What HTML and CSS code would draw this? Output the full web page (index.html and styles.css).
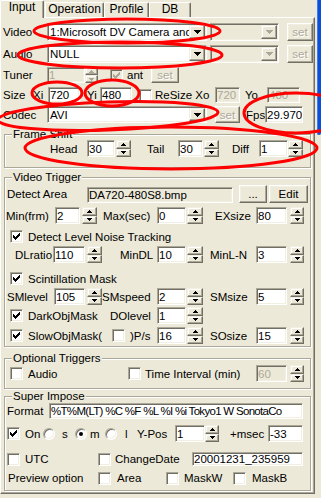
FILE: index.html
```html
<!DOCTYPE html>
<html>
<head>
<meta charset="utf-8">
<link rel="stylesheet" href="styles.css">
</head>
<body>
<div class="window">
  <div class="main">
    <div class="tabs">
      <div class="tab sel w44">Input</div>
      <div class="tab ml1 w59">Operation</div>
      <div class="tab w45">Profile</div>
      <div class="tab w42">DB</div>
    </div>
    <div class="panel">
      <div class="row h18 mt5">
        <span class="lbl ml2 w44">Video</span>
        <div class="combo w160"><span class="val">1:Microsoft DV Camera and VCR</span><i class="drop"></i></div>
        <div class="combo dis ml3 w69"><span class="val"></span><i class="drop"></i></div>
        <div class="btn dis ml8 w26">set</div>
      </div>
      <div class="row h18 mt4">
        <span class="lbl ml2 w44">Audio</span>
        <div class="combo w160"><span class="val">NULL</span><i class="drop"></i></div>
        <div class="combo dis ml3 w69"><span class="val"></span><i class="drop"></i></div>
        <div class="btn dis ml8 w26">set</div>
      </div>
      <div class="row h16 mt4">
        <span class="lbl ml2 w44">Tuner</span>
        <div class="edit dis w38">1</div>
        <div class="spin dis w13"><i class="up"></i><i class="dn"></i></div>
        <span class="chk on dis ml12"></span>
        <span class="lbl ml4 w24">ant</span>
        <div class="btn dis w28">set</div>
      </div>
      <div class="row h16 mt4">
        <span class="lbl ml2 w30">Size</span>
        <span class="lbl w15">Xi</span>
        <div class="edit w32">720</div>
        <span class="lbl ml7 w13">Yi</span>
        <div class="edit w32">480</div>
        <span class="chk ml7"></span>
        <span class="lbl ml3 w60">ReSize Xo</span>
        <div class="edit dis w25">720</div>
        <span class="lbl ml5 w22">Yo</span>
        <div class="edit dis w33">480</div>
      </div>
      <div class="row h17 mt3">
        <span class="lbl ml2 w44">Codec</span>
        <div class="combo w160"><span class="val">AVI</span><i class="drop"></i></div>
        <div class="btn dis ml8 w25">set</div>
        <span class="lbl ml6 w19">Fps</span>
        <div class="edit w38">29.970</div>
      </div>

      <div class="group fs">
        <div class="legend">Frame Shift</div>
        <div class="row h17">
          <span class="lbl ml45 w37">Head</span>
          <div class="edit w28">30</div>
          <div class="spin ml1"><i class="up"></i><i class="dn"></i></div>
          <span class="lbl ml16 w31">Tail</span>
          <div class="edit w25">30</div>
          <div class="spin ml1"><i class="up"></i><i class="dn"></i></div>
          <span class="lbl ml13 w27">Diff</span>
          <div class="edit w29">1</div>
          <div class="spin"><i class="up"></i><i class="dn"></i></div>
        </div>
      </div>

      <div class="group vt">
        <div class="legend">Video Trigger</div>
        <div class="row h18 mt2">
          <span class="lbl ml2 w80">Detect Area</span>
          <div class="edit ro w146">DA720-480S8.bmp</div>
          <div class="btn ml6 w28">...</div>
          <div class="btn ml2 w39">Edit</div>
        </div>
        <div class="row h17 mt4">
          <span class="lbl ml1 w49">Min(frm)</span>
          <div class="edit w25">2</div>
          <div class="spin ml2"><i class="up"></i><i class="dn"></i></div>
          <span class="lbl ml6 w54">Max(sec)</span>
          <div class="edit w29">0</div>
          <div class="spin ml1 w16"><i class="up"></i><i class="dn"></i></div>
          <span class="lbl ml12 w41">EXsize</span>
          <div class="edit w31">80</div>
          <div class="spin ml3 w14"><i class="up"></i><i class="dn"></i></div>
        </div>
        <div class="row h13 mt6">
          <span class="chk on ml5"></span>
          <span class="lbl ml5">Detect Level Noise Tracking</span>
        </div>
        <div class="row h17 mt3">
          <span class="lbl ml10 w38">DLratio</span>
          <div class="edit w32">110</div>
          <div class="spin ml2"><i class="up"></i><i class="dn"></i></div>
          <span class="lbl ml18 w37">MinDL</span>
          <div class="edit w29">10</div>
          <div class="spin ml1 w16"><i class="up"></i><i class="dn"></i></div>
          <span class="lbl ml7 w46">MinL-N</span>
          <div class="edit w31">3</div>
          <div class="spin ml3 w14"><i class="up"></i><i class="dn"></i></div>
        </div>
        <div class="row h13 mt9">
          <span class="chk on ml5"></span>
          <span class="lbl ml5">Scintillation Mask</span>
        </div>
        <div class="row h17 mt3">
          <span class="lbl ml2 w47">SMlevel</span>
          <div class="edit w31">105</div>
          <div class="spin ml2"><i class="up"></i><i class="dn"></i></div>
          <span class="lbl w55">SMspeed</span>
          <div class="edit w29">2</div>
          <div class="spin ml1 w16"><i class="up"></i><i class="dn"></i></div>
          <span class="lbl ml7 w46">SMsize</span>
          <div class="edit w31">5</div>
          <div class="spin ml3 w14"><i class="up"></i><i class="dn"></i></div>
        </div>
        <div class="row h17 mt2">
          <span class="chk on ml5"></span>
          <span class="lbl ml5 w82">DarkObjMask</span>
          <span class="lbl w47">DOlevel</span>
          <div class="edit w29">1</div>
          <div class="spin ml1 w16"><i class="up"></i><i class="dn"></i></div>
        </div>
        <div class="row h17 mt3">
          <span class="chk on ml5"></span>
          <span class="lbl ml5 w84">SlowObjMask(</span>
          <span class="chk"></span>
          <span class="lbl ml5 w27">)P/s</span>
          <div class="edit w29">16</div>
          <div class="spin ml1 w16"><i class="up"></i><i class="dn"></i></div>
          <span class="lbl ml7 w46">SOsize</span>
          <div class="edit w31">15</div>
          <div class="spin ml3 w14"><i class="up"></i><i class="dn"></i></div>
        </div>
      </div>

      <div class="group ot">
        <div class="legend">Optional Triggers</div>
        <div class="row h17 mt1">
          <span class="chk ml5"></span>
          <span class="lbl ml5 w100">Audio</span>
          <span class="chk"></span>
          <span class="lbl ml4 w111">Time Interval (min)</span>
          <div class="edit dis w31">60</div>
          <div class="spin ml3 w14"><i class="up"></i><i class="dn"></i></div>
        </div>
      </div>

      <div class="group si">
        <div class="legend">Super Impose</div>
        <div class="row h16 mt1">
          <span class="lbl ml2 w42">Format</span>
          <div class="edit fmt w254">%T%M(LT) %C %F %L %I %i Tokyo1 W SonotaCo</div>
        </div>
        <div class="row h17 mt6">
          <span class="chk on ml2"></span>
          <span class="lbl ml5 w18">On</span>
          <span class="radio"></span>
          <span class="lbl ml7 w13">s</span>
          <span class="radio on"></span>
          <span class="lbl ml3 w15">m</span>
          <span class="radio"></span>
          <span class="lbl ml8 w12">l</span>
          <span class="lbl w38">Y-Pos</span>
          <div class="edit w30">1</div>
          <div class="spin w14"><i class="up"></i><i class="dn"></i></div>
          <span class="lbl ml11 w38">+msec</span>
          <div class="edit w35">-33</div>
        </div>
        <div class="row h14 mt10">
          <span class="chk ml2"></span>
          <span class="lbl ml5 w73">UTC</span>
          <span class="chk"></span>
          <span class="lbl ml4 w77">ChangeDate</span>
          <div class="edit w111">20001231_235959</div>
        </div>
        <div class="row h14 mt5">
          <span class="lbl ml3 w90">Preview option</span>
          <span class="chk"></span>
          <span class="lbl ml6 w49">Area</span>
          <span class="chk"></span>
          <span class="lbl ml5 w49">MaskW</span>
          <span class="chk"></span>
          <span class="lbl ml6">MaskB</span>
        </div>
      </div>
    </div>
  </div>
  <div class="edge"></div>
</div>
<svg class="marks" width="321" height="498" viewBox="0 0 321 498">
  <g fill="none" stroke="#ff0000" stroke-width="3">
    <ellipse cx="127" cy="31" rx="93" ry="12"/>
    <ellipse cx="120" cy="55" rx="102" ry="13"/>
    <ellipse cx="57" cy="93" rx="25" ry="11"/>
    <ellipse cx="112" cy="93" rx="27" ry="13"/>
    <ellipse cx="108" cy="116" rx="110" ry="14" transform="rotate(-2 108 116)"/>
    <ellipse cx="296" cy="113" rx="52" ry="20"/>
    <ellipse cx="171" cy="148" rx="146" ry="21"/>
  </g>
</svg>
</body>
</html>
```

FILE: styles.css
```css
* { box-sizing: border-box; }
html, body { margin: 0; padding: 0; }
body {
  width: 321px;
  height: 498px;
  overflow: hidden;
  position: relative;
  background: #ECE9D8;
  color: #000;
  font-family: "Liberation Sans", Arial, sans-serif;
  font-size: 11.5px;
}
.window { display: flex; align-items: flex-start; }
.main { width: 317px; flex: none; }
.edge {
  width: 4px;
  height: 135px;
  flex: none;
  background: #0A4FDC;
  box-shadow: inset 1px 0 #3D7BF0;
  border-radius: 0 0 2px 2px;
}

/* tabs */
.tabs { display: flex; align-items: flex-end; height: 17px; }
.tab {
  flex: none;
  height: 15px;
  border: 1px solid #fff;
  border-bottom: none;
  border-right-color: #716F64;
  box-shadow: inset -1px 0 #ACA899;
  border-radius: 2px 2px 0 0;
  text-align: center;
  line-height: 13px;
  font-size: 12px;
  white-space: nowrap;
}
.tab.sel {
  height: 18px;
  margin-bottom: -1px;
  position: relative;
  z-index: 1;
  background: #ECE9D8;
}

/* panel */
.panel {
  width: 315px;
  height: 477px;
  border: 1px solid;
  border-color: #fff #716F64 #716F64 #fff;
  box-shadow: inset -1px -1px #ACA899;
}

.row { display: flex; align-items: center; }
.lbl { flex: none; white-space: nowrap; line-height: 14px; }

/* group boxes */
.group {
  margin-left: 3px;
  width: 307px;
  border: 1px solid #ACA899;
  box-shadow: inset 1px 1px #fff, 1px 1px #fff;
}
.legend {
  margin: -7px 0 0 7px;
  padding: 0 1px;
  width: max-content;
  background: #ECE9D8;
  line-height: 12px;
}
.fs { margin-top: 11px; height: 34px; }
.vt { margin-top: 9px; height: 170px; }
.ot { margin-top: 11px; height: 31px; }
.si { margin-top: 7px; height: 95px; }

/* edit box */
.edit {
  flex: none;
  align-self: stretch;
  background: #fff;
  border: 1px solid;
  border-color: #ACA899 #fff #fff #ACA899;
  box-shadow: inset 1px 1px #716F64, inset -1px -1px #F1EFE2;
  padding: 0 1px 0 1px;
  display: flex;
  align-items: center;
  white-space: nowrap;
  overflow: hidden;
}
.edit.dis { background: #ECE9D8; color: #ACA899; }
.edit.ro { background: #ECE9D8; align-self: flex-end; height: 16px; }
.edit.fmt { letter-spacing: -0.7px; }

/* combo */
.combo {
  flex: none;
  align-self: stretch;
  display: flex;
  padding: 1px;
  background: #fff;
  border: 1px solid;
  border-color: #ACA899 #fff #fff #ACA899;
  box-shadow: inset 1px 1px #716F64, inset -1px -1px #F1EFE2;
}
.combo.dis { background: #ECE9D8; }
.combo .val {
  flex: 1;
  min-width: 0;
  padding-left: 1px;
  overflow: hidden;
  white-space: nowrap;
  display: flex;
  align-items: center;
}
.combo .drop {
  width: 16px;
  flex: none;
  background: #ECE9D8;
  border: 1px solid;
  border-color: #F1EFE2 #716F64 #716F64 #F1EFE2;
  box-shadow: inset -1px -1px #ACA899, inset 1px 1px #fff;
  display: flex;
  align-items: center;
  justify-content: center;
}
.combo .drop::after {
  content: "";
  width: 7px;
  height: 4px;
  background:
    linear-gradient(#000, #000) 0 0 / 7px 1px no-repeat,
    linear-gradient(#000, #000) 1px 1px / 5px 1px no-repeat,
    linear-gradient(#000, #000) 2px 2px / 3px 1px no-repeat,
    linear-gradient(#000, #000) 3px 3px / 1px 1px no-repeat;
}
.combo.dis .drop::after {
  background:
    linear-gradient(#ACA899, #ACA899) 0 0 / 7px 1px no-repeat,
    linear-gradient(#ACA899, #ACA899) 1px 1px / 5px 1px no-repeat,
    linear-gradient(#ACA899, #ACA899) 2px 2px / 3px 1px no-repeat,
    linear-gradient(#ACA899, #ACA899) 3px 3px / 1px 1px no-repeat;
}

/* buttons */
.btn {
  flex: none;
  align-self: stretch;
  border: 1px solid;
  border-color: #fff #716F64 #716F64 #fff;
  box-shadow: inset -1px -1px #ACA899, inset 1px 1px #F1EFE2;
  display: flex;
  align-items: center;
  justify-content: center;
  white-space: nowrap;
}
.dis { color: #ACA899; }
.btn.dis { text-shadow: 1px 1px #fff; }

/* spinner */
.spin {
  flex: none;
  align-self: stretch;
  width: 15px;
  display: flex;
  flex-direction: column;
}
.spin i {
  flex: 1;
  border: 1px solid;
  border-color: #F1EFE2 #716F64 #716F64 #F1EFE2;
  box-shadow: inset -1px -1px #ACA899, inset 1px 1px #fff;
  display: flex;
  align-items: center;
  justify-content: center;
}
.spin i::after {
  content: "";
  width: 5px;
  height: 3px;
}
.spin .up::after {
  background:
    linear-gradient(#000, #000) 2px 0 / 1px 1px no-repeat,
    linear-gradient(#000, #000) 1px 1px / 3px 1px no-repeat,
    linear-gradient(#000, #000) 0 2px / 5px 1px no-repeat;
}
.spin .dn::after {
  background:
    linear-gradient(#000, #000) 0 0 / 5px 1px no-repeat,
    linear-gradient(#000, #000) 1px 1px / 3px 1px no-repeat,
    linear-gradient(#000, #000) 2px 2px / 1px 1px no-repeat;
}
.spin.dis .up::after {
  background:
    linear-gradient(#ACA899, #ACA899) 2px 0 / 1px 1px no-repeat,
    linear-gradient(#ACA899, #ACA899) 1px 1px / 3px 1px no-repeat,
    linear-gradient(#ACA899, #ACA899) 0 2px / 5px 1px no-repeat;
}
.spin.dis .dn::after {
  background:
    linear-gradient(#ACA899, #ACA899) 0 0 / 5px 1px no-repeat,
    linear-gradient(#ACA899, #ACA899) 1px 1px / 3px 1px no-repeat,
    linear-gradient(#ACA899, #ACA899) 2px 2px / 1px 1px no-repeat;
}

/* checkbox */
.chk {
  flex: none;
  display: block;
  width: 13px;
  height: 13px;
  padding: 4px 0 0 2px;
  background: #fff;
  border: 1px solid;
  border-color: #ACA899 #fff #fff #ACA899;
  box-shadow: inset 1px 1px #716F64, inset -1px -1px #F1EFE2;
}
.chk.dis { background: #ECE9D8; }
.chk.on::after {
  content: "";
  display: block;
  width: 1px;
  height: 3px;
  background: #000;
  box-shadow: 1px 1px #000, 2px 2px #000, 3px 1px #000, 4px 0 #000, 5px -1px #000, 6px -2px #000;
}
.chk.on.dis::after {
  background: #ACA899;
  box-shadow: 1px 1px #ACA899, 2px 2px #ACA899, 3px 1px #ACA899, 4px 0 #ACA899, 5px -1px #ACA899, 6px -2px #ACA899;
}

/* radio */
.radio {
  flex: none;
  width: 12px;
  height: 12px;
  border-radius: 50%;
  background: #fff;
  border: 1px solid;
  border-color: #ACA899 #fff #fff #ACA899;
  box-shadow: inset 1px 1px #716F64, inset -1px -1px #F1EFE2;
  display: flex;
  align-items: center;
  justify-content: center;
}
.radio.on::after {
  content: "";
  width: 4px;
  height: 4px;
  border-radius: 50%;
  background: #000;
}

/* red annotation marks */
.marks { position: absolute; left: 0; top: 0; pointer-events: none; }

/* spacing utilities */
.h13 { height: 13px; } .h14 { height: 14px; } .h16 { height: 16px; }
.h17 { height: 17px; } .h18 { height: 18px; }
.mt1 { margin-top: 1px; } .mt2 { margin-top: 2px; } .mt3 { margin-top: 3px; }
.mt4 { margin-top: 4px; } .mt5 { margin-top: 5px; } .mt6 { margin-top: 6px; }
.mt9 { margin-top: 9px; } .mt10 { margin-top: 10px; }
.ml1 { margin-left: 1px; } .ml2 { margin-left: 2px; } .ml3 { margin-left: 3px; }
.ml4 { margin-left: 4px; } .ml5 { margin-left: 5px; } .ml6 { margin-left: 6px; }
.ml7 { margin-left: 7px; } .ml8 { margin-left: 8px; } .ml10 { margin-left: 10px; }
.ml11 { margin-left: 11px; } .ml12 { margin-left: 12px; } .ml13 { margin-left: 13px; }
.ml16 { margin-left: 16px; } .ml18 { margin-left: 18px; } .ml45 { margin-left: 45px; }
.w12 { width: 12px; } .w13 { width: 13px; } .w14 { width: 14px; } .w15 { width: 15px; }
.w16 { width: 16px; } .w18 { width: 18px; } .w19 { width: 19px; } .w22 { width: 22px; }
.w24 { width: 24px; } .w25 { width: 25px; } .w26 { width: 26px; } .w27 { width: 27px; }
.w28 { width: 28px; } .w29 { width: 29px; } .w30 { width: 30px; } .w31 { width: 31px; }
.w32 { width: 32px; } .w33 { width: 33px; } .w35 { width: 35px; } .w37 { width: 37px; }
.w38 { width: 38px; } .w39 { width: 39px; } .w41 { width: 41px; } .w42 { width: 42px; }
.w44 { width: 44px; } .w45 { width: 45px; } .w46 { width: 46px; } .w47 { width: 47px; }
.w49 { width: 49px; } .w54 { width: 54px; } .w55 { width: 55px; } .w59 { width: 59px; }
.w60 { width: 60px; } .w69 { width: 69px; } .w73 { width: 73px; } .w77 { width: 77px; }
.w80 { width: 80px; } .w82 { width: 82px; } .w84 { width: 84px; } .w90 { width: 90px; }
.w100 { width: 100px; } .w111 { width: 111px; } .w146 { width: 146px; }
.w160 { width: 160px; } .w254 { width: 254px; }
```
